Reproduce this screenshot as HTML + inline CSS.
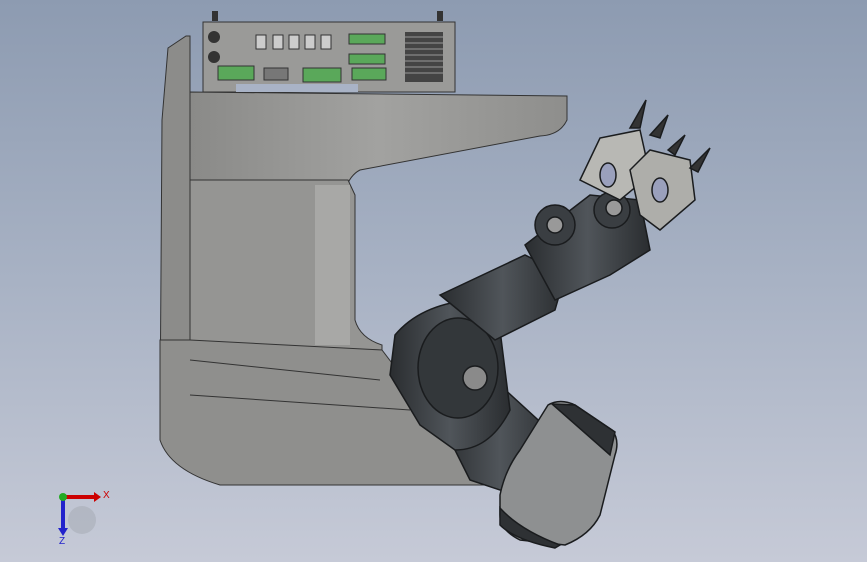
<!DOCTYPE html><html><head><style>html,body{margin:0;padding:0;width:867px;height:562px;overflow:hidden}body{background:linear-gradient(#8d9bb1,#a8b2c4 50%,#c6cad7)}svg{position:absolute;left:0;top:0}</style></head><body>
<svg width="867" height="562" viewBox="0 0 867 562" font-family="Liberation Sans, sans-serif">
<defs>
<linearGradient id="g1" x1="0" x2="1"><stop offset="0" stop-color="#8a8a88"/><stop offset=".5" stop-color="#a2a2a0"/><stop offset="1" stop-color="#8e8e8c"/></linearGradient>
<linearGradient id="dk" x1="0" x2="1"><stop offset="0" stop-color="#2a2d30"/><stop offset=".5" stop-color="#50555a"/><stop offset="1" stop-color="#2a2d30"/></linearGradient>
</defs>
<path d="M168 48 L186 36 L190 36 L190 470 L176 460 Q160 440 160 420 L162 120 Z" fill="#8c8c8a" stroke="#333"/>
<rect x="203" y="22" width="252" height="70" fill="#9a9a98" stroke="#333"/>
<rect x="212" y="11" width="6" height="10" fill="#333"/><rect x="437" y="11" width="6" height="10" fill="#333"/>
<circle cx="214" cy="37" r="6" fill="#333"/><circle cx="214" cy="57" r="6" fill="#333"/>
<g fill="#ccc" stroke="#333"><rect x="256" y="35" width="10" height="14"/><rect x="273" y="35" width="10" height="14"/><rect x="289" y="35" width="10" height="14"/><rect x="305" y="35" width="10" height="14"/><rect x="321" y="35" width="10" height="14"/></g>
<g fill="#5aa85a" stroke="#333"><rect x="349" y="34" width="36" height="10"/><rect x="349" y="54" width="36" height="10"/><rect x="352" y="68" width="34" height="12"/><rect x="218" y="66" width="36" height="14"/><rect x="303" y="68" width="38" height="14"/></g>
<rect x="264" y="68" width="24" height="12" fill="#777" stroke="#333"/>
<rect x="405" y="32" width="38" height="50" fill="#444"/>
<g stroke="#999"><line x1="405" y1="37" x2="443" y2="37"/><line x1="405" y1="43" x2="443" y2="43"/><line x1="405" y1="49" x2="443" y2="49"/><line x1="405" y1="55" x2="443" y2="55"/><line x1="405" y1="61" x2="443" y2="61"/><line x1="405" y1="67" x2="443" y2="67"/><line x1="405" y1="73" x2="443" y2="73"/></g>
<rect x="236" y="84" width="122" height="8" fill="#a9b3c6"/>
<path d="M190 92 L567 96 L567 120 Q560 135 540 136 L360 170 Q350 175 345 190 L200 190 L190 180 Z" fill="url(#g1)" stroke="#333"/>
<path d="M190 180 L348 180 L355 195 L355 320 Q360 338 382 345 L382 350 L190 345 Z" fill="#959593" stroke="#333"/>
<rect x="315" y="185" width="35" height="160" fill="#a8a8a6"/>
<path d="M160 340 L190 340 L382 350 L420 400 L500 470 L500 485 L220 485 Q170 470 160 440 Z" fill="#8f8f8d" stroke="#333"/>
<path d="M190 395 L410 410" stroke="#333"/><path d="M190 360 L380 380" stroke="#333"/>
<g stroke="#1a1c1e" stroke-width="1.5">
<!-- lower segment -->
<path d="M440 420 L500 385 L560 440 L530 500 L470 480 Z" fill="url(#dk)"/>
<!-- gripper block -->
<path d="M548 405 Q560 398 575 405 L612 430 Q620 440 615 455 L600 515 Q590 535 565 545 L520 540 Q500 530 500 515 L500 495 Q505 470 520 450 Z" fill="#8e9091"/>
<path d="M552 404 L575 405 L615 432 L610 455 Z" fill="#2e3134"/>
<path d="M500 508 Q520 530 560 545 L555 548 Q515 540 500 525 Z" fill="#2e3134"/>
<!-- lower joint -->
<path d="M395 335 Q420 305 470 300 L500 330 L510 410 Q490 450 455 450 L420 425 L390 375 Z" fill="url(#dk)"/>
<ellipse cx="458" cy="368" rx="40" ry="50" fill="#33373a"/><circle cx="475" cy="378" r="12" fill="#8a8a8a"/>
<!-- middle segment -->
<path d="M440 295 L525 255 L565 275 L555 310 L495 340 Z" fill="url(#dk)"/>
<!-- upper joints -->
<path d="M525 245 L590 195 L640 200 L650 250 L610 275 L555 300 Z" fill="url(#dk)"/>
<circle cx="555" cy="225" r="20" fill="#3a3e42"/><circle cx="555" cy="225" r="8" fill="#999"/>
<circle cx="612" cy="210" r="18" fill="#3a3e42"/><circle cx="614" cy="208" r="8" fill="#999"/>
<path d="M580 180 L600 138 L640 130 L650 175 L620 200 Z" fill="#b8b8b4"/>
<path d="M630 170 L650 150 L690 160 L695 200 L660 230 L640 215 Z" fill="#aeaeaa"/>
<ellipse cx="608" cy="175" rx="8" ry="12" fill="#9aa0bc"/><ellipse cx="660" cy="190" rx="8" ry="12" fill="#9aa0bc"/>
<path d="M630 128 L646 100 L640 128 Z M650 135 L668 115 L660 138 Z M668 150 L685 135 L675 155 Z M690 168 L710 148 L698 172 Z" fill="#333"/>
</g>
<circle cx="82" cy="520" r="14" fill="#a8adb8" opacity=".6"/>
<line x1="63" y1="497" x2="94" y2="497" stroke="#c00" stroke-width="4"/><path d="M94 492 L101 497 L94 502Z" fill="#c00"/>
<line x1="63" y1="497" x2="63" y2="528" stroke="#22c" stroke-width="4"/><path d="M58 528 L63 536 L68 528Z" fill="#22c"/>
<circle cx="63" cy="497" r="4" fill="#2a2"/>
<text x="103" y="498" font-size="10" fill="#c00">X</text><text x="59" y="544" font-size="10" fill="#22c">Z</text>
</svg></body></html>
